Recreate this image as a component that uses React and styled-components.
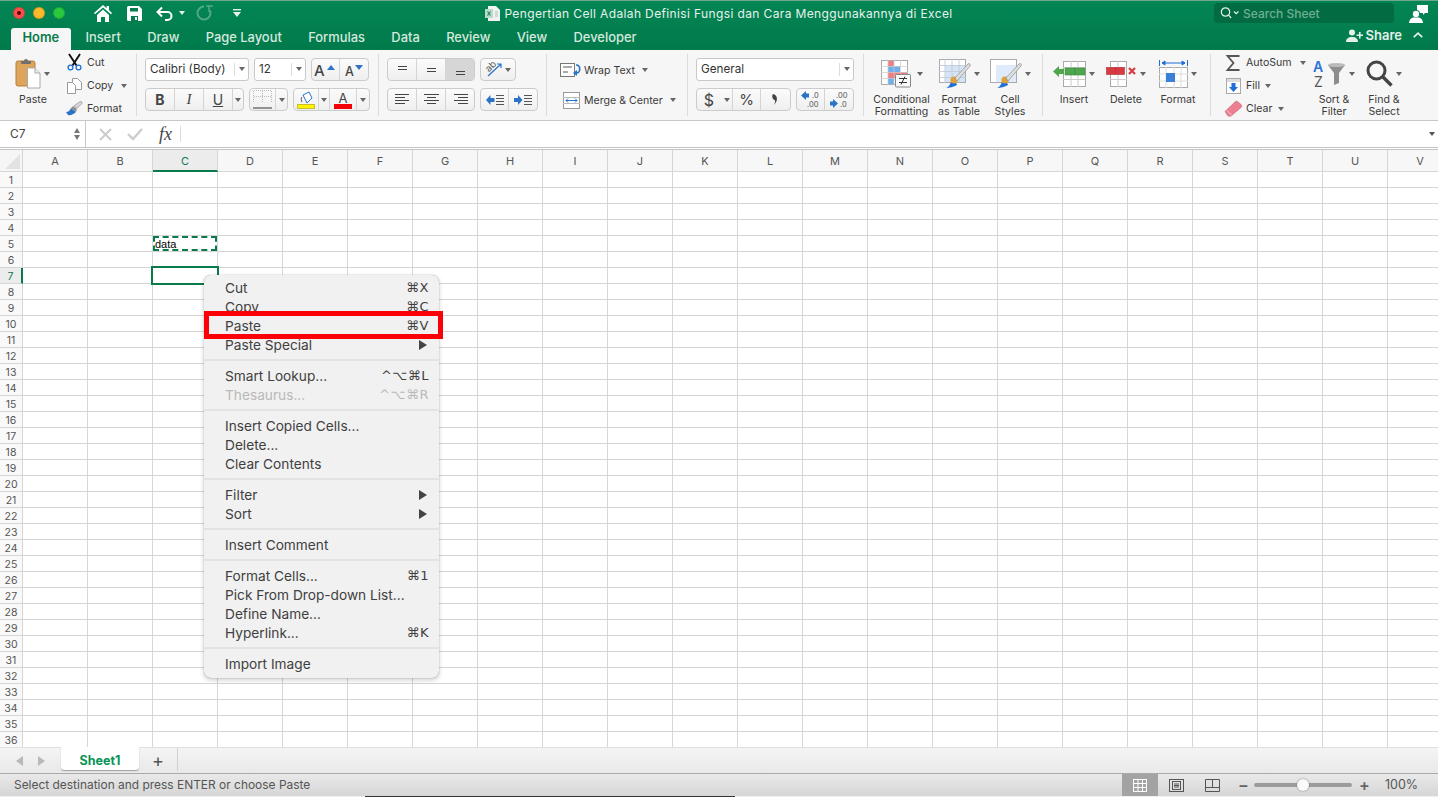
import styled, { createGlobalStyle } from 'styled-components'

const GREEN = '#0a7a4b'
const LINE = '#d6d6d6'
const UI_FONT = `Inter, "Noto Sans", "DejaVu Sans", sans-serif`

const GlobalStyle = createGlobalStyle`
  html, body {
    margin: 0;
    padding: 0;
    overflow: hidden;
    background: #fff;
  }
  * {
    box-sizing: border-box;
  }
  svg {
    overflow: visible;
  }
`

const Window = styled.div`
  position: relative;
  width: 1438px;
  height: 797px;
  display: flex;
  flex-direction: column;
  overflow: hidden;
  font-family: ${UI_FONT};
  color: #3a3a3a;
`

/* title bar */

const TitleBar = styled.header`
  flex: none;
  height: 50px;
  background: linear-gradient(#038554, #017a4b);
  border-top: 1px solid #6fa78d;
  color: #fff;
`

const TopRow = styled.div`
  height: 27px;
  padding-bottom: 3px;
  display: grid;
  grid-template-columns: 1fr auto 1fr;
  align-items: center;
`

const TopLeft = styled.div`
  display: flex;
  align-items: center;
  padding-left: 13px;
`

const Light = styled.span`
  width: 12px;
  height: 12px;
  margin-right: 8px;
  border-radius: 50%;
  background: ${(p) => p.$color};
  border: 1px solid rgba(0, 0, 0, 0.15);
  display: flex;
  align-items: center;
  justify-content: center;

  &::after {
    content: '';
    width: 4px;
    height: 4px;
    border-radius: 50%;
    background: ${(p) => (p.$dot ? '#5a0000' : 'transparent')};
  }
`

const Qat = styled.span`
  display: flex;
  width: ${(p) => p.$w}px;
  justify-content: center;
  align-items: center;
  opacity: ${(p) => (p.$off ? 0.3 : 1)};
`

const QatGroup = styled.div`
  display: flex;
  align-items: center;
  margin-left: 14px;
`

const Title = styled.div`
  display: flex;
  align-items: center;
  gap: 4px;
  font-size: 12px;
  letter-spacing: 0.37px;
  color: #e6f2ec;
  white-space: nowrap;
`

const TopRight = styled.div`
  display: flex;
  justify-content: flex-end;
  align-items: center;
  padding-right: 10px;
`

const Search = styled.div`
  width: 180px;
  height: 20px;
  margin-right: 15px;
  padding-left: 6px;
  display: flex;
  align-items: center;
  gap: 3px;
  border-radius: 4px;
  background: #026b42;
  color: #6fb093;
  font-size: 12px;
  font-weight: 500;
  letter-spacing: 0;
`

const TabRow = styled.div`
  height: 22px;
  display: flex;
  justify-content: space-between;
`

const Tabs = styled.nav`
  display: flex;
  padding-left: 11px;
`

const Tab = styled.div`
  height: 22px;
  padding: ${(p) => (p.$active ? '0 11.5px 3px' : '0 13.2px 3px')};
  margin-right: ${(p) => (p.$active ? '1.5px' : '0')};
  display: flex;
  align-items: center;
  font-size: 12.9px;
  font-weight: ${(p) => (p.$active ? 600 : 500)};
  color: ${(p) => (p.$active ? GREEN : '#d5e8de')};
  background: ${(p) => (p.$active ? '#f6f6f6' : 'transparent')};
  border-radius: 3px 3px 0 0;
`

const ShareBox = styled.div`
  display: flex;
  align-items: center;
  gap: 2px;
  height: 16px;
  padding-right: 15px;
  margin-top: -1px;
  font-size: 13px;
  font-weight: 600;
  color: #e4f0ea;
`

const ChevronWrap = styled.span`
  display: flex;
  margin-left: 9px;
`

/* ribbon */

const Ribbon = styled.section`
  flex: none;
  height: 71px;
  display: flex;
  background: #f6f6f6;
  border-bottom: 1px solid #c8c8c8;
  font-size: 10.6px;
`

const Group = styled.div`
  flex: none;
  width: ${(p) => p.$w}px;
  padding-left: ${(p) => p.$pl || 0}px;
  display: flex;
`

const Sep = styled.div`
  flex: none;
  width: 1px;
  height: 62px;
  margin-top: 4px;
  background: #dcdcdc;
`

const Large = styled.div`
  flex: none;
  width: ${(p) => p.$w}px;
  display: flex;
  flex-direction: column;
  align-items: center;
  text-align: center;
  line-height: 12px;
`

const LargeIcon = styled.div`
  height: 44px;
  padding-bottom: 1px;
  display: flex;
  align-items: center;
  gap: 3px;
  padding-top: 4px;
`

const Caret = styled.span`
  display: inline-block;
  flex: none;
  width: 0;
  height: 0;
  margin-left: ${(p) => p.$ml || 0}px;
  border-left: 3px solid transparent;
  border-right: 3px solid transparent;
  border-top: 4px solid ${(p) => p.$color || '#666'};
`

const SmallColumn = styled.div`
  flex: none;
  width: ${(p) => p.$w}px;
  padding-left: ${(p) => p.$pl || 0}px;
  padding-top: ${(p) => p.$pt ?? 1}px;
  display: flex;
  flex-direction: column;
`

const SmallAction = styled.div`
  height: 23px;
  display: flex;
  align-items: center;
  gap: 5px;
  white-space: nowrap;
`

const SmallIcon = styled.span`
  width: ${(p) => p.$w || 16}px;
  display: flex;
  justify-content: center;
  flex: none;
`

const WideAction = styled.div`
  height: 30px;
  display: flex;
  align-items: center;
  white-space: nowrap;
`

const WideLabel = styled.span`
  margin: 0 7px 0 2px;
`

const Controls = styled.div`
  padding-top: 8px;
  display: flex;
  flex-direction: column;
  gap: 7px;
`

const ControlRow = styled.div`
  display: flex;
  gap: 5px;
  height: 23px;
`

const Select = styled.div`
  width: ${(p) => p.$w}px;
  height: 23px;
  padding: 0 0 1px 4px;
  display: flex;
  align-items: center;
  justify-content: space-between;
  background: #fff;
  border: 1px solid #c9c9c9;
  border-radius: 3px;
  font-size: 11.7px;
  color: #333;
`

const SelectArrow = styled.span`
  width: 14px;
  height: 13px;
  display: flex;
  align-items: center;
  justify-content: center;
  border-left: 1px solid #ddd;
`

const Seg = styled.div`
  display: flex;
  height: 23px;
  border: 1px solid #cbcbcb;
  border-radius: 4px;
  overflow: hidden;
  background: linear-gradient(#fbfbfb, #efefef);
`

const SegBtn = styled.div`
  width: ${(p) => p.$w}px;
  display: flex;
  align-items: center;
  justify-content: center;
  gap: 2px;
  font-size: ${(p) => p.$size || 13}px;
  font-weight: ${(p) => p.$weight || 400};
  font-style: ${(p) => (p.$italic ? 'italic' : 'normal')};
  font-family: ${(p) => (p.$serif ? '"Liberation Serif", serif' : 'inherit')};
  text-decoration: ${(p) => (p.$under ? 'underline' : 'none')};
  color: #444;
  background: ${(p) => (p.$on ? '#d6d6d6' : 'transparent')};
  border-right: 1px solid ${(p) => (p.$plain ? 'transparent' : '#d4d4d4')};

  &:last-child {
    border-right: none;
  }
`

const SvgLabel = styled.text`
  font-family: ${UI_FONT};
`

/* formula bar */

const FormulaBar = styled.div`
  flex: none;
  height: 29px;
  display: flex;
  align-items: stretch;
  background: #fff;
  border-bottom: 3px double #c4c4c4;
`

const NameBox = styled.div`
  width: 86px;
  padding: 0 5px 1px 10px;
  display: flex;
  align-items: center;
  justify-content: space-between;
  border-right: 1px solid #c8c8c8;
  font-size: 12px;
  color: #444;
`

const Stepper = styled.div`
  display: flex;
  flex-direction: column;
  gap: 2px;
`

const StepArrow = styled.span`
  width: 0;
  height: 0;
  border-left: 3.5px solid transparent;
  border-right: 3.5px solid transparent;
  ${(p) => (p.$up ? 'border-bottom' : 'border-top')}: 5px solid #777;
`

const FormulaTools = styled.div`
  width: 95px;
  padding-left: 13px;
  display: flex;
  align-items: center;
  gap: 15px;
`

const Fx = styled.span`
  width: 22px;
  height: 16px;
  margin-left: 1px;
  display: flex;
  align-items: center;
  border-right: 1px solid #ddd;
  font-family: 'Liberation Serif', serif;
  font-style: italic;
  font-size: 18px;
  color: #444;
`

const FormulaInput = styled.div`
  flex: 1;
  display: flex;
  align-items: center;
  justify-content: flex-end;
  padding-right: 3px;
`

/* sheet */

const Sheet = styled.main`
  flex: 1;
  min-height: 0;
  overflow: hidden;
  background: #fff;
`

const HeaderRow = styled.div`
  display: flex;
  height: 22px;
`

const Corner = styled.div`
  flex: none;
  width: 23px;
  position: relative;
  background: #f6f6f6;
  border-right: 1px solid ${LINE};
  border-bottom: 1px solid ${LINE};

  &::after {
    content: '';
    position: absolute;
    right: 2px;
    bottom: 2px;
    border-left: 15px solid transparent;
    border-bottom: 15px solid #e2e2e2;
  }
`

const ColHead = styled.div`
  flex: none;
  width: 65px;
  padding-top: 1px;
  display: flex;
  align-items: center;
  justify-content: center;
  background: ${(p) => (p.$active ? '#ececec' : '#f7f7f7')};
  border-right: 1px solid ${LINE};
  border-bottom: ${(p) => (p.$active ? `2px solid ${GREEN}` : `1px solid ${LINE}`)};
  font-size: 11px;
  color: ${(p) => (p.$active ? GREEN : '#555')};
`

const Row = styled.div`
  display: flex;
  height: 16px;
`

const RowHead = styled.div`
  flex: none;
  width: 23px;
  padding-top: 1px;
  display: flex;
  align-items: center;
  justify-content: center;
  background: ${(p) => (p.$active ? '#ececec' : '#f9f9f9')};
  border-right: ${(p) => (p.$active ? `2px solid ${GREEN}` : `1px solid ${LINE}`)};
  border-bottom: 1px solid ${LINE};
  font-size: 10.5px;
  color: ${(p) => (p.$active ? GREEN : '#555')};
`

const Cell = styled.div`
  flex: none;
  position: relative;
  width: 65px;
  padding-left: 2px;
  display: flex;
  align-items: center;
  border-right: 1px solid ${LINE};
  border-bottom: 1px solid ${LINE};
  font-family: 'Liberation Sans', sans-serif;
  font-size: 11px;
  color: #000;
`

const CopyMarquee = styled.span`
  position: absolute;
  inset: 0 0 0 0;
  border: 2px dashed ${GREEN};
`

const ActiveCell = styled.span`
  position: absolute;
  top: -2px;
  left: -2px;
  right: -2px;
  bottom: -2px;
  z-index: 1;
  border: 2px solid ${GREEN};
`

/* bottom bars */

const SheetBar = styled.div`
  flex: none;
  height: 26px;
  display: flex;
  align-items: stretch;
  background: linear-gradient(#f4f4f4, #e9e9e9);
  border-top: 1px solid #e0e0e0;
`

const SheetNav = styled.div`
  width: 61px;
  padding-left: 16px;
  display: flex;
  align-items: center;
  gap: 15px;
`

const NavArrow = styled.span`
  width: 0;
  height: 0;
  border-top: 5px solid transparent;
  border-bottom: 5px solid transparent;
  ${(p) => (p.$left ? 'border-right' : 'border-left')}: 7px solid #b9b9b9;
`

const SheetTab = styled.div`
  width: 78px;
  height: 23px;
  padding-top: 3px;
  margin-top: -1px;
  display: flex;
  align-items: center;
  justify-content: center;
  background: #fff;
  border-radius: 0 0 3px 3px;
  box-shadow: 0 1px 1px #9d9d9d;
  font-size: 12.5px;
  font-weight: 700;
  color: #0a9455;
`

const AddSheet = styled.div`
  width: 39px;
  height: 23px;
  padding-top: 1px;
  display: flex;
  align-items: center;
  justify-content: center;
  border-right: 1px solid #d0d0d0;
  font-size: 18px;
  color: #555;
`

const StatusBar = styled.footer`
  flex: none;
  height: 23px;
  padding-left: 14px;
  display: flex;
  align-items: center;
  justify-content: space-between;
  background: linear-gradient(#e9e9e9, #d6d6d6);
  border-top: 1px solid #a9a9a9;
  font-size: 11.95px;
  line-height: 20px;
  color: #555;
`

const StatusRight = styled.div`
  height: 100%;
  display: flex;
  align-items: center;
`

const ViewBtn = styled.div`
  width: 36px;
  height: 100%;
  display: flex;
  align-items: center;
  justify-content: center;
  background: ${(p) => (p.$on ? '#a3a3a3' : 'transparent')};
`

const Zoomer = styled.div`
  display: flex;
  align-items: center;
  gap: 7px;
  margin-left: 8px;
  width: 130px;
`

const ZoomSign = styled.span`
  width: 9px;
  text-align: center;
  font-size: 16px;
  font-weight: 600;
  line-height: 16px;
  color: #666;
`

const Track = styled.div`
  position: relative;
  width: 98px;
  height: 4px;
  border-radius: 2px;
  background: #9c9c9c;
`

const Knob = styled.span`
  position: absolute;
  left: 43px;
  top: -4px;
  width: 12px;
  height: 12px;
  border-radius: 50%;
  background: #fafafa;
  box-shadow: 0 0 2px #777;
`

const ZoomValue = styled.span`
  width: 70px;
  padding-left: 17px;
  font-size: 12.5px;
`

const DesktopEdge = styled.div`
  flex: none;
  height: 1px;
  background: linear-gradient(90deg, #f0f0f0 365px, #333 365px, #333 735px, #f0f0f0 735px);
`

/* context menu */

const Menu = styled.div`
  position: absolute;
  left: 204px;
  top: 275px;
  z-index: 2;
  width: 235px;
  padding: 3px 0 5px;
  background: #f1f1f1;
  border-radius: 7px;
  box-shadow: 0 0 1px rgba(0, 0, 0, 0.45), 0 2px 5px rgba(0, 0, 0, 0.2);
  font-size: 13.7px;
`

const MenuItem = styled.div`
  height: 19px;
  padding: 0 10px 0 21px;
  display: flex;
  align-items: center;
  justify-content: space-between;
  color: ${(p) => (p.$off ? '#b9b9b9' : '#404040')};
  white-space: nowrap;
`

const Shortcut = styled.span`
  font-family: 'DejaVu Sans', sans-serif;
  font-size: 13px;
  letter-spacing: 0.5px;
`

const SubArrow = styled.span`
  width: 0;
  height: 0;
  margin-right: 2px;
  border-top: 5px solid transparent;
  border-bottom: 5px solid transparent;
  border-left: 8px solid #444;
`

const MenuSep = styled.div`
  height: 2px;
  margin: 5px 0;
  background: #e3e3e3;
`

const PasteMark = styled.div`
  position: absolute;
  left: 204px;
  top: 311px;
  z-index: 3;
  width: 239px;
  height: 28px;
  border: 5px solid #fb0007;
`

/* icons */

const Home = () => (
  <svg width="18" height="17" viewBox="0 0 18 17" fill="#fff">
    <path d="M9 0 0 8l1 1.3L9 2.4l8 6.9L18 8l-3-2.7V1h-2.4v2.2z" />
    <path d="M3 10 9 4.6l6 5.4v7h-4v-5H7v5H3z" />
  </svg>
)

const Save = () => (
  <svg width="15" height="15" viewBox="0 0 15 15">
    <path d="M0 1.5A1.5 1.5 0 0 1 1.5 0H12l3 3v10.5a1.5 1.5 0 0 1-1.5 1.5h-12A1.5 1.5 0 0 1 0 13.5z" fill="#fff" />
    <path d="M3 2h8v3.5H3zM4 10h7v5H4z" fill="#047c4e" />
    <path d="M8 11h2v3H8z" fill="#fff" />
  </svg>
)

const Undo = () => (
  <svg width="18" height="15" viewBox="0 0 18 15" fill="none" stroke="#fff" strokeWidth="2">
    <path d="M6 1.5 1.5 6 6 10.5M2 6h9.5a4 4 0 0 1 0 8H9" />
  </svg>
)

const Redo = () => (
  <svg width="16" height="16" viewBox="0 0 16 16" fill="none" stroke="#fff" strokeWidth="2">
    <path d="M6 1.5a6.5 6.5 0 1 0 6 4" />
    <path d="M8 1h7M11 0v7" strokeWidth="1.5" />
  </svg>
)

const QatMenu = () => (
  <svg width="8" height="9" viewBox="0 0 8 9" fill="#e6f2ec">
    <rect width="8" height="1.4" />
    <path d="M0 3h8L4 8z" />
  </svg>
)

const ExcelDoc = () => (
  <svg width="15" height="15" viewBox="0 0 15 15">
    <path d="M3 0h8l4 4v11H3z" fill="#f2f2f2" />
    <rect y="3" width="8" height="9" fill="#bcd8c8" />
    <path d="M2 5.5h1.2L4 7l.8-1.5H6L4.6 7.5 6 9.6H4.8L4 8.1l-.8 1.5H2l1.4-2.1z" fill="#0a7a4b" />
    <path d="M10 6h3M10 8h3M10 10h3" stroke="#a5c8b5" />
  </svg>
)

const SearchGlass = () => (
  <svg width="20" height="12" viewBox="0 0 20 12" fill="none" stroke="#e4f0ea" strokeWidth="1.2">
    <circle cx="5.5" cy="5" r="4.2" />
    <path d="m8.6 8.2 2.6 2.8M14 4.5l2.2 2.2 2.2-2.2" />
  </svg>
)

const Person = () => (
  <svg width="19" height="19" viewBox="0 0 19 19" fill="#fff">
    <path d="M8 1h11v8h-3l-2 2V9H8z" />
    <circle cx="7" cy="10" r="3.8" stroke="#047c4e" />
    <path d="M0 19c0-3 2-5 4-5.5h6c2 .5 4 2.5 4 5.5z" />
  </svg>
)

const ShareIcon = () => (
  <svg width="18" height="13" viewBox="0 0 18 13" fill="#e4f0ea">
    <circle cx="6" cy="3.5" r="3" />
    <path d="M0 13c0-3 2-5 6-5s6 2 6 5zM13 3h1.6v2.5H17v1.6h-2.4v2.5H13V7.1h-2.4V5.5H13z" />
  </svg>
)

const Chevron = () => (
  <svg width="10" height="6" viewBox="0 0 10 6" fill="none" stroke="#e4f0ea" strokeWidth="1.8">
    <path d="m.8 5.2 4.2-4 4.2 4" />
  </svg>
)

const Clipboard = () => (
  <svg width="25" height="31" viewBox="0 0 25 31">
    <rect y="3" width="19" height="25" rx="2" fill="#dca55b" stroke="#b9813a" />
    <path d="M5 5V3h3a2 2 0 0 1 4 0h3v2a1 1 0 0 1-1 1H6a1 1 0 0 1-1-1z" fill="#6f6f6f" />
    <path d="M11.5 10H19l5 5v15H11.5z" fill="#fff" stroke="#aaa" />
    <path d="M19 10v5h5" fill="#eee" stroke="#aaa" />
  </svg>
)

const Scissors = () => (
  <svg width="15" height="17" viewBox="0 0 15 17" fill="none">
    <path d="M2 0l7.5 11.5M13 0 5.5 11.5" stroke="#111" strokeWidth="1.9" />
    <circle cx="3.5" cy="13.5" r="2.4" stroke="#1f6fd6" strokeWidth="1.3" />
    <circle cx="11.5" cy="13.5" r="2.4" stroke="#1f6fd6" strokeWidth="1.3" />
  </svg>
)

const CopyIcon = () => (
  <svg width="15" height="16" viewBox="0 0 15 16" fill="#fff" stroke="#9a9a9a">
    <path d="M5.5.5h5l4 4v7h-9z" />
    <path d="M.5 4.500h5l3 3v8h-8z" />
  </svg>
)

const Brush = () => (
  <svg width="17" height="15" viewBox="0 0 17 15">
    <path d="M0 11c3 0 4-2 5-4l5 4c-2 2-6 4-8 3z" fill="#2a73c7" />
    <path d="M5 7l2-2 4 3-1 3z" fill="#8f8f8f" />
    <path d="M8 4.800 14 .5c1-.6 2.800.8 2 2l-5 4.800z" fill="#d5d5d5" stroke="#888" strokeWidth=".6" />
  </svg>
)

const Lines = ({ rows }) => (
  <svg width="17" height="13" viewBox="0 0 17 13" stroke="#444" strokeWidth="1">
    {rows.map(([x1, x2, y]) => (
      <line key={y} x1={x1} x2={x2} y1={y + 0.5} y2={y + 0.5} />
    ))}
  </svg>
)

const Orientation = () => (
  <svg width="17" height="17" viewBox="0 0 17 17">
    <SvgLabel x="1" y="9" fontSize="9.500" fill="#555" transform="rotate(-45 5 8)">ab</SvgLabel>
    <path d="M2 15 15 3M11 3h4v4" fill="none" stroke="#2a73c7" strokeWidth="1.2" />
  </svg>
)

const Indent = ({ right }) => (
  <svg width="18" height="10" viewBox="0 0 18 10">
    <path d={right ? 'M0 3h4V0l4.500 5L4 10V7H0z' : 'M8.500 3h-4V0L0 5l4.500 5V7h4z'} fill="#2a73c7" />
    <path d="M10 .5h8M10 3.500h8M10 6.500h8M10 9.500h8" stroke="#555" />
  </svg>
)

const BorderIcon = () => (
  <svg width="19" height="19" viewBox="0 0 19 19" fill="none">
    <path d="M.5 1v12M9.500 1v12M18.500 1v12M1 .5h17M1 6.500h17" stroke="#bbb" strokeDasharray="1 1" />
    <path d="M0 18h19" stroke="#333" strokeWidth="1.2" />
  </svg>
)

const FillIcon = () => (
  <svg width="18" height="18" viewBox="0 0 18 18">
    <path d="M6 4 12 1l3 6-5 5z" fill="#fff" stroke="#2a73c7" />
    <path d="M5 6c-1 1-1 4 0 5" fill="none" stroke="#555" />
    <rect x=".5" y="13.500" width="17" height="4" fill="#fff200" stroke="#c7bf2a" />
  </svg>
)

const ColorIcon = () => (
  <svg width="18" height="18" viewBox="0 0 18 18">
    <SvgLabel x="9" y="11.500" fontSize="13" textAnchor="middle" fill="#444">A</SvgLabel>
    <rect y="13" width="18" height="5" fill="#f40008" />
  </svg>
)

const SizeIcon = ({ big }) => (
  <svg width="24" height="16" viewBox="0 0 24 16">
    <SvgLabel x={big ? 0 : 3} y="14" fontSize={big ? 15 : 12.500} fontWeight="500" fill="#444">A</SvgLabel>
    <path d={big ? 'M13 8l4-5 4 5z' : 'M13 3h8l-4 5z'} fill="#2a73c7" />
  </svg>
)

const CommaStyle = () => (
  <svg width="7" height="11" viewBox="0 0 7 11" fill="#444">
    <path d="M1 0c4 .5 6 6 1 11 1-2 1.500-3.500.8-5C.5 6-.5 1.500 1 0z" />
  </svg>
)

const WrapIcon = () => (
  <svg width="22" height="14" viewBox="0 0 22 14" fill="none">
    <rect x=".5" y=".5" width="14" height="13" fill="#fff" stroke="#777" />
    <path d="M3 4h9M3 9h5" stroke="#555" />
    <path d="M16 2c5 0 5 8 0 8" stroke="#2a73c7" strokeWidth="1.6" />
    <path d="M13 10l4-3v6z" fill="#2a73c7" />
  </svg>
)

const MergeIcon = () => (
  <svg width="17" height="17" viewBox="0 0 17 17" fill="none">
    <rect x=".5" y=".5" width="16" height="16" fill="#fff" stroke="#999" />
    <path d="M0 5.500h17M0 11.500h17" stroke="#bbb" />
    <rect x="1" y="6" width="15" height="5" fill="#fff" />
    <path d="M3 8.500h11" stroke="#2a73c7" />
    <path d="M5 6.500 3 8.500l2 2M12 6.500l2 2-2 2" stroke="#2a73c7" />
  </svg>
)

const Decimal = ({ more }) => (
  <svg width="20" height="17" viewBox="0 0 20 17">
    {more ? (
      <>
        <path d="M0 4.500 5 0v2.500h3v4H5V9z" fill="#2a73c7" />
        <SvgLabel x="11" y="7" fontSize="7.500" fill="#555">.0</SvgLabel>
        <SvgLabel x="6" y="15.500" fontSize="7.500" fill="#555">.00</SvgLabel>
      </>
    ) : (
      <>
        <SvgLabel x="7" y="6.500" fontSize="7.500" fill="#555">.00</SvgLabel>
        <path d="M9 12.500 4 8v2.500H1v4h3V17z" fill="#2a73c7" />
        <SvgLabel x="11" y="15.500" fontSize="7.500" fill="#555">.0</SvgLabel>
      </>
    )}
  </svg>
)

const CondFormat = () => (
  <svg width="33" height="28" viewBox="0 0 33 28">
    <rect x=".5" y=".5" width="26" height="24" fill="#fff" stroke="#aaa" />
    <rect x="7" y="1" width="6" height="5" fill="#f27e85" />
    <rect x="7" y="6" width="12" height="6" fill="#6fb0ec" />
    <rect x="7" y="12" width="19" height="6" fill="#f27e85" />
    <rect x="7" y="18" width="6" height="6" fill="#6fb0ec" />
    <path d="M7 0v25M13 0v25M19.500 0v25M0 6.500h27M0 12.500h27M0 18.500h27" stroke="#ccc" strokeWidth=".7" />
    <rect x="14.500" y="14.500" width="15" height="12.500" rx="1" fill="#fafafa" stroke="#888" />
    <path d="M18 18.500h8M18 22.500h8M24 16.500l-4 8" stroke="#333" />
  </svg>
)

const TableBrush = ({ fill }) => (
  <svg width="32" height="29" viewBox="0 0 32 29">
    <rect x=".5" y=".5" width="26" height="23" fill="#fff" stroke="#aaa" />
    <rect x="6" y="6" width="20" height="17" fill={fill} />
    <path d="M6 0v24M13 0v24M20 0v24M0 6.500h27M0 12.500h27M0 18.500h27" stroke={fill === '#d5e4f6' ? '#bcc8d6' : 'transparent'} strokeWidth=".8" />
    <path d="M7 29c3-1 4-4 5-6 3-1 6 1 6 3-3 2-8 3-11 3z" fill="#1f6fd6" />
    <circle cx="15" cy="21" r="3.600" fill="#e0a23a" />
    <path d="M16 19 29 5c1-1 3 0 2 2L18 22z" fill="#dfdfdf" stroke="#8a8a8a" strokeWidth=".7" />
  </svg>
)

const InsertIcon = () => (
  <svg width="33" height="26" viewBox="0 0 33 26">
    <rect x="10.500" y=".5" width="22" height="25" fill="#fff" stroke="#aaa" />
    <path d="M18 0v26M25 0v26M10 6.500h22M10 18.500h22" stroke="#ccc" />
    <rect x="12" y="7" width="10" height="7" fill="#4ea64f" stroke="#3d8a3e" strokeWidth=".6" />
    <rect x="22" y="7" width="10" height="7" fill="#4ea64f" stroke="#3d8a3e" strokeWidth=".6" />
    <path d="M0 10.500 6 5v3h5v5H6v3z" fill="#4ea64f" />
  </svg>
)

const DeleteIcon = () => (
  <svg width="31" height="26" viewBox="0 0 31 26">
    <rect x="4.500" y=".5" width="16" height="25" fill="#fff" stroke="#aaa" />
    <path d="M12 0v26M4 6.500h17M4 18.500h17" stroke="#ccc" />
    <rect x=".5" y="6.500" width="9" height="7" fill="#d93a41" stroke="#b42a30" strokeWidth=".6" />
    <rect x="9.500" y="6.500" width="9" height="7" fill="#d93a41" stroke="#b42a30" strokeWidth=".6" />
    <path d="m23 7 6 6m0-6-6 6" stroke="#d93a41" strokeWidth="2.200" />
  </svg>
)

const FormatIcon = () => (
  <svg width="29" height="28" viewBox="0 0 29 28">
    <path d="M.5 0v6M28.500 0v6M3 3h23M3 3l3-2v4zM26 3l-3-2v4z" fill="#1f6fd6" stroke="#1f6fd6" />
    <rect x=".5" y="7.500" width="28" height="20" fill="#fff" stroke="#aaa" />
    <path d="M7 7v21M15 7v21M22 7v21M0 14h29M0 21h29" stroke="#ddd" />
    <rect x="7" y="13" width="9" height="9" fill="#3a80d8" />
  </svg>
)

const Sigma = () => (
  <svg width="14" height="16" viewBox="0 0 14 16" fill="none" stroke="#555" strokeWidth="1.800">
    <path d="M13.500 1H1.500l6 7-6 7h12" />
  </svg>
)

const FillDown = () => (
  <svg width="15" height="16" viewBox="0 0 15 16">
    <rect x=".5" y=".5" width="14" height="15" fill="#fff" stroke="#aaa" />
    <rect x="1" y="1" width="13" height="3" fill="#ddd" />
    <path d="M5.500 5h4v4H12l-4.500 5L3 9h2.500z" fill="#1f6fd6" />
  </svg>
)

const Eraser = () => (
  <svg width="17" height="15" viewBox="0 0 17 15">
    <path d="M0 10.500 10 1c1-1 2-1 3 0l3 2.500c1 1 1 2 0 3L6 15c-1 .5-2 0-3 0z" fill="#ee7f92" stroke="#c25a6c" strokeWidth=".6" />
    <path d="M2 9.500l5 5" stroke="#f9c5cd" />
  </svg>
)

const SortIcon = () => (
  <svg width="33" height="28" viewBox="0 0 33 28">
    <SvgLabel x="0" y="12" fontSize="14" fontWeight="600" fill="#2a73d8">A</SvgLabel>
    <SvgLabel x="1" y="27" fontSize="14" fill="#555">Z</SvgLabel>
    <path d="M15 5h17l-6 8v10l-5 2V13z" fill="#8d8d8d" />
    <ellipse cx="23.500" cy="5" rx="8.500" ry="2" fill="#bbb" />
  </svg>
)

const FindIcon = () => (
  <svg width="27" height="27" viewBox="0 0 27 27" fill="none" stroke="#444">
    <circle cx="10.500" cy="10.500" r="8.500" strokeWidth="3" />
    <path d="m17 17 8.500 8.500" strokeWidth="3.400" />
  </svg>
)

const Cross = () => (
  <svg width="13" height="13" viewBox="0 0 13 13" stroke="#ccc" strokeWidth="2">
    <path d="m1 1 11 11M12 1 1 12" />
  </svg>
)

const Check = () => (
  <svg width="16" height="12" viewBox="0 0 16 12" fill="none" stroke="#ccc" strokeWidth="2.400">
    <path d="m1 6 5 5 9-10" />
  </svg>
)

const GridView = () => (
  <svg width="14" height="13" viewBox="0 0 14 13" fill="none" stroke="#fff">
    <rect x=".5" y=".5" width="13" height="12" />
    <path d="M5 0v13M9.500 0v13M0 4.500h14M0 8.500h14" />
  </svg>
)

const PageView = () => (
  <svg width="15" height="13" viewBox="0 0 15 13" fill="none" stroke="#555">
    <rect x=".5" y=".5" width="14" height="12" />
    <rect x="3.500" y="2.500" width="8" height="8" />
    <path d="M5 5h5M5 6.500h5M5 8h5" />
  </svg>
)

const BreakView = () => (
  <svg width="15" height="13" viewBox="0 0 15 13" fill="none" stroke="#555">
    <path d="M.5.500h14v12H.5zM.5 8.500h14M7.500 0v8.500" />
  </svg>
)

/* data */

const TABS = ['Home', 'Insert', 'Draw', 'Page Layout', 'Formulas', 'Data', 'Review', 'View', 'Developer']
const COLUMNS = 'ABCDEFGHIJKLMNOPQRSTUV'.split('')
const ROWS = Array.from({ length: 36 }, (_, i) => i + 1)

const MENU = [
  [
    { label: 'Cut', keys: '⌘X' },
    { label: 'Copy', keys: '⌘C' },
    { label: 'Paste', keys: '⌘V' },
    { label: 'Paste Special', sub: true },
  ],
  [
    { label: 'Smart Lookup...', keys: '^⌥⌘L' },
    { label: 'Thesaurus...', keys: '^⌥⌘R', off: true },
  ],
  [{ label: 'Insert Copied Cells...' }, { label: 'Delete...' }, { label: 'Clear Contents' }],
  [
    { label: 'Filter', sub: true },
    { label: 'Sort', sub: true },
  ],
  [{ label: 'Insert Comment' }],
  [
    { label: 'Format Cells...', keys: '⌘1' },
    { label: 'Pick From Drop-down List...' },
    { label: 'Define Name...' },
    { label: 'Hyperlink...', keys: '⌘K' },
  ],
  [{ label: 'Import Image' }],
]

const ContextMenu = () => (
  <Menu>
    {MENU.map((section, i) => (
      <div key={i}>
        {i > 0 && <MenuSep />}
        {section.map((item) => (
          <MenuItem key={item.label} $off={item.off}>
            {item.label}
            {item.keys && <Shortcut>{item.keys}</Shortcut>}
            {item.sub && <SubArrow />}
          </MenuItem>
        ))}
      </div>
    ))}
  </Menu>
)

const LargeButton = ({ w, icon, noCaret, children }) => (
  <Large $w={w}>
    <LargeIcon>
      {icon}
      {!noCaret && <Caret />}
    </LargeIcon>
    {children}
  </Large>
)

const RibbonBar = () => (
  <Ribbon>
    <Group $w={136}>
      <LargeButton w={66} icon={<Clipboard />}>
        Paste
      </LargeButton>
      <SmallColumn $w={70}>
        <SmallAction>
          <SmallIcon><Scissors /></SmallIcon>Cut
        </SmallAction>
        <SmallAction>
          <SmallIcon><CopyIcon /></SmallIcon>Copy<Caret $ml={3} />
        </SmallAction>
        <SmallAction>
          <SmallIcon><Brush /></SmallIcon>Format
        </SmallAction>
      </SmallColumn>
    </Group>
    <Sep />

    <Group $w={241} $pl={8}>
      <Controls>
        <ControlRow>
          <Select $w={104}>
            Calibri (Body)
            <SelectArrow><Caret /></SelectArrow>
          </Select>
          <Select $w={52}>
            12
            <SelectArrow><Caret /></SelectArrow>
          </Select>
          <Seg>
            <SegBtn $w={28}><SizeIcon big /></SegBtn>
            <SegBtn $w={28}><SizeIcon /></SegBtn>
          </Seg>
        </ControlRow>
        <ControlRow>
          <Seg>
            <SegBtn $w={29} $weight={700} $size={14}>B</SegBtn>
            <SegBtn $w={29} $italic $serif $size={15}>I</SegBtn>
            <SegBtn $w={29} $under $size={14}>U</SegBtn>
            <SegBtn $w={10}><Caret /></SegBtn>
          </Seg>
          <Seg>
            <SegBtn $w={26}><BorderIcon /></SegBtn>
            <SegBtn $w={11}><Caret /></SegBtn>
          </Seg>
          <Seg>
            <SegBtn $w={25}><FillIcon /></SegBtn>
            <SegBtn $w={11}><Caret /></SegBtn>
            <SegBtn $w={27}><ColorIcon /></SegBtn>
            <SegBtn $w={12}><Caret /></SegBtn>
          </Seg>
        </ControlRow>
      </Controls>
    </Group>
    <Sep />

    <Group $w={167} $pl={8}>
      <Controls>
        <ControlRow>
          <Seg>
            <SegBtn $w={29}><Lines rows={[[4, 13, 3], [4, 13, 6]]} /></SegBtn>
            <SegBtn $w={29}><Lines rows={[[4, 13, 5], [4, 13, 8]]} /></SegBtn>
            <SegBtn $w={28} $on><Lines rows={[[4, 13, 8], [4, 13, 11]]} /></SegBtn>
          </Seg>
          <Seg>
            <SegBtn $w={34}><Orientation /><Caret /></SegBtn>
          </Seg>
        </ControlRow>
        <ControlRow>
          <Seg>
            <SegBtn $w={29}><Lines rows={[[1, 15, 1], [1, 11, 4], [1, 15, 7], [1, 11, 10]]} /></SegBtn>
            <SegBtn $w={29}><Lines rows={[[1, 16, 1], [4, 13, 4], [1, 16, 7], [4, 13, 10]]} /></SegBtn>
            <SegBtn $w={28}><Lines rows={[[2, 16, 1], [6, 16, 4], [2, 16, 7], [6, 16, 10]]} /></SegBtn>
          </Seg>
          <Seg>
            <SegBtn $w={28}><Indent /></SegBtn>
            <SegBtn $w={28}><Indent right /></SegBtn>
          </Seg>
        </ControlRow>
      </Controls>
    </Group>
    <Sep />

    <Group $w={140} $pl={13}>
      <SmallColumn $w={127} $pt={5}>
        <WideAction>
          <WrapIcon />
          <WideLabel>Wrap Text</WideLabel>
          <Caret />
        </WideAction>
        <WideAction>
          <SmallIcon $w={22}><MergeIcon /></SmallIcon>
          <WideLabel>Merge &amp; Center</WideLabel>
          <Caret />
        </WideAction>
      </SmallColumn>
    </Group>
    <Sep />

    <Group $w={175} $pl={8}>
      <Controls>
        <ControlRow>
          <Select $w={158}>
            General
            <SelectArrow><Caret /></SelectArrow>
          </Select>
        </ControlRow>
        <ControlRow>
          <Seg>
            <SegBtn $w={25} $size={16} $plain>$</SegBtn>
            <SegBtn $w={11}><Caret /></SegBtn>
            <SegBtn $w={28} $size={15}>%</SegBtn>
            <SegBtn $w={29}><CommaStyle /></SegBtn>
          </Seg>
          <Seg>
            <SegBtn $w={28}><Decimal more /></SegBtn>
            <SegBtn $w={28}><Decimal /></SegBtn>
          </Seg>
        </ControlRow>
      </Controls>
    </Group>
    <Sep />

    <Group $w={178} $pl={9}>
      <LargeButton w={57} icon={<CondFormat />}>
        Conditional
        <br />
        Formatting
      </LargeButton>
      <LargeButton w={58} icon={<TableBrush fill="#d5e4f6" />}>
        Format
        <br />
        as Table
      </LargeButton>
      <LargeButton w={44} icon={<TableBrush fill="#dfeafa" />}>
        Cell
        <br />
        Styles
      </LargeButton>
    </Group>
    <Sep />

    <Group $w={167} $pl={5}>
      <LargeButton w={52} icon={<InsertIcon />}>Insert</LargeButton>
      <LargeButton w={52} icon={<DeleteIcon />}>Delete</LargeButton>
      <LargeButton w={52} icon={<FormatIcon />}>Format</LargeButton>
    </Group>
    <Sep />

    <Group $w={227}>
      <SmallColumn $w={98} $pl={14}>
        <SmallAction>
          <SmallIcon $w={16}><Sigma /></SmallIcon>AutoSum<Caret $ml={3} />
        </SmallAction>
        <SmallAction>
          <SmallIcon $w={16}><FillDown /></SmallIcon>Fill<Caret />
        </SmallAction>
        <SmallAction>
          <SmallIcon $w={16}><Eraser /></SmallIcon>Clear<Caret />
        </SmallAction>
      </SmallColumn>
      <LargeButton w={50} icon={<SortIcon />}>
        Sort &amp;
        <br />
        Filter
      </LargeButton>
      <LargeButton w={50} icon={<FindIcon />}>
        Find &amp;
        <br />
        Select
      </LargeButton>
    </Group>
  </Ribbon>
)

const Grid = () => (
  <Sheet>
    <HeaderRow>
      <Corner />
      {COLUMNS.map((c) => (
        <ColHead key={c} $active={c === 'C'}>{c}</ColHead>
      ))}
    </HeaderRow>
    {ROWS.map((r) => (
      <Row key={r}>
        <RowHead $active={r === 7}>{r}</RowHead>
        {COLUMNS.map((c) => (
          <Cell key={c}>
            {c === 'C' && r === 5 && (
              <>
                <CopyMarquee />
                data
              </>
            )}
            {c === 'C' && r === 7 && <ActiveCell />}
          </Cell>
        ))}
      </Row>
    ))}
  </Sheet>
)

const App = () => {
  return (
    <>
      <GlobalStyle />
      <Window>
        <TitleBar>
          <TopRow>
            <TopLeft>
              <Light $color="#fc4f4b" $dot />
              <Light $color="#fdb82c" />
              <Light $color="#29c93f" />
              <QatGroup>
                <Qat $w={32}><Home /></Qat>
                <Qat $w={31}><Save /></Qat>
                <Qat $w={29}><Undo /></Qat>
                <Caret $color="#e6f2ec" />
                <Qat $w={41} $off><Redo /></Qat>
                <Qat $w={22}><QatMenu /></Qat>
              </QatGroup>
            </TopLeft>
            <Title>
              <ExcelDoc />
              Pengertian Cell Adalah Definisi Fungsi dan Cara Menggunakannya di Excel
            </Title>
            <TopRight>
              <Search>
                <SearchGlass />
                Search Sheet
              </Search>
              <Person />
            </TopRight>
          </TopRow>
          <TabRow>
            <Tabs>
              {TABS.map((t) => (
                <Tab key={t} $active={t === 'Home'}>{t}</Tab>
              ))}
            </Tabs>
            <ShareBox>
              <ShareIcon />
              Share
              <ChevronWrap><Chevron /></ChevronWrap>
            </ShareBox>
          </TabRow>
        </TitleBar>

        <RibbonBar />

        <FormulaBar>
          <NameBox>
            C7
            <Stepper>
              <StepArrow $up />
              <StepArrow />
            </Stepper>
          </NameBox>
          <FormulaTools>
            <Cross />
            <Check />
            <Fx>fx</Fx>
          </FormulaTools>
          <FormulaInput>
            <Caret $color="#555" />
          </FormulaInput>
        </FormulaBar>

        <Grid />

        <SheetBar>
          <SheetNav>
            <NavArrow $left />
            <NavArrow />
          </SheetNav>
          <SheetTab>Sheet1</SheetTab>
          <AddSheet>+</AddSheet>
        </SheetBar>

        <StatusBar>
          Select destination and press ENTER or choose Paste
          <StatusRight>
            <ViewBtn $on><GridView /></ViewBtn>
            <ViewBtn><PageView /></ViewBtn>
            <ViewBtn><BreakView /></ViewBtn>
            <Zoomer>
              <ZoomSign>−</ZoomSign>
              <Track><Knob /></Track>
              <ZoomSign>+</ZoomSign>
            </Zoomer>
            <ZoomValue>100%</ZoomValue>
          </StatusRight>
        </StatusBar>
        <DesktopEdge />

        <ContextMenu />
        <PasteMark />
      </Window>
    </>
  )
}

export default App
